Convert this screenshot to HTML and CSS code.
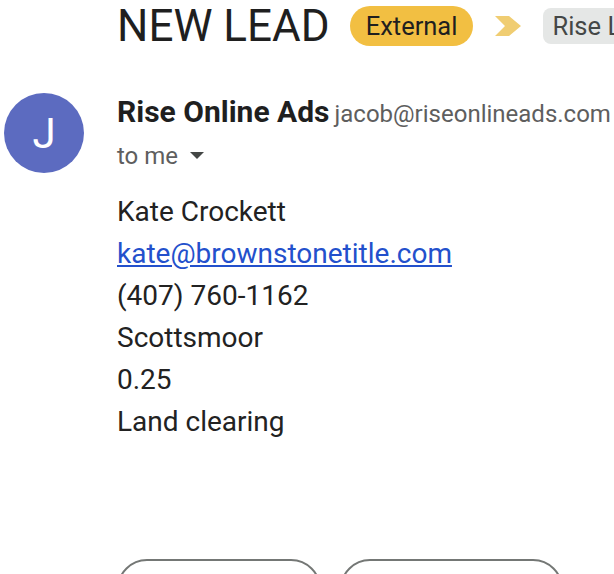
FILE: index.html
```html
<!DOCTYPE html>
<html>
<head>
<meta charset="utf-8">
<link rel="stylesheet" href="styles.css">
</head>
<body>
<div class="page">
  <header class="subject-row">
    <h1 class="subject">NEW LEAD</h1>
    <span class="badge badge-external">External</span>
    <svg class="chevron" width="26" height="20" viewBox="0 0 26 20"><path d="M0 0 H14 L26 10 L14 20 H0 L10 10 Z" fill="#f0cd72"/></svg>
    <span class="badge badge-label">Rise Leads</span>
  </header>
  <section class="message">
    <div class="avatar">J</div>
    <div class="content">
      <div class="sender"><span class="sender-name">Rise Online Ads</span><span class="sender-email">jacob@riseonlineads.com</span></div>
      <div class="recipient">to me <svg class="caret" width="14" height="8" viewBox="0 0 14 8"><path d="M0 0 H14 L7 7 Z" fill="#444746"/></svg></div>
      <div class="body">
        <div class="line">Kate Crockett</div>
        <div class="line"><a href="#" class="link">kate@brownstonetitle.com</a></div>
        <div class="line">(407) 760-1162</div>
        <div class="line">Scottsmoor</div>
        <div class="line">0.25</div>
        <div class="line">Land clearing</div>
      </div>
      <div class="actions">
        <button class="btn btn-reply">Reply</button>
        <button class="btn btn-forward">Forward</button>
      </div>
    </div>
  </section>
</div>
</body>
</html>
```

FILE: styles.css
```css
html, body {
  margin: 0;
  padding: 0;
  background: #ffffff;
  overflow: hidden;
}
body {
  font-family: Roboto, "Liberation Sans", Arial, sans-serif;
  color: #1f1f1f;
  width: 614px;
  height: 574px;
}
.page {
  padding-left: 4px;
}
.subject-row {
  display: flex;
  align-items: center;
  padding-left: 113px;
  height: 52px;
  white-space: nowrap;
  overflow: hidden;
}
.subject {
  margin: 0;
  font-size: 44px;
  font-weight: 400;
  line-height: 52px;
  color: #1f1f1f;
  margin-right: 20px;
  flex: none;
}
.badge {
  display: inline-flex;
  align-items: center;
  height: 40px;
  font-size: 25.5px;
  color: #1f1f1f;
  box-sizing: border-box;
  flex: none;
}
.badge-external {
  background: #f2bf42;
  border-radius: 20px;
  padding: 0 16px;
}
.chevron {
  margin-left: 22px;
  margin-right: 22px;
  flex: none;
}
.badge-label {
  background: #e5e7e6;
  border-radius: 8px;
  height: 36px;
  padding: 0 9px;
  color: #444746;
}
.message {
  display: grid;
  grid-template-columns: 80px 1fr;
  column-gap: 33px;
  margin-top: 41px;
}
.avatar {
  width: 80px;
  height: 80px;
  border-radius: 50%;
  background: #5c6bc0;
  color: #ffffff;
  font-size: 42px;
  font-weight: 400;
  display: flex;
  align-items: center;
  justify-content: center;
}
.content {
  padding-top: 1px;
  white-space: nowrap;
}
.sender {
  font-size: 29px;
  line-height: 36px;
}
.sender-name {
  font-size: 30px;
  font-weight: 700;
  color: #1f1f1f;
}
.sender-email {
  font-size: 24px;
  color: #5e5e5e;
  margin-left: 5px;
}
.recipient {
  font-size: 24px;
  line-height: 32px;
  margin-top: 8px;
  color: #5e5e5e;
  display: flex;
  align-items: center;
}
.caret {
  margin-left: 12px;
}
.body {
  margin-top: 19px;
  font-size: 28px;
  color: #222222;
}
.line {
  line-height: 42px;
}
.link {
  color: #2350cc;
  text-decoration: underline;
}
.actions {
  display: flex;
  gap: 19px;
  margin-top: 116px;
}
.btn {
  height: 68px;
  border: 2px solid #747775;
  border-radius: 30px;
  background: #ffffff;
  font-family: inherit;
  font-size: 22px;
  color: #444746;
  flex: none;
}
.btn-reply {
  width: 204px;
}
.btn-forward {
  width: 223px;
}
```
